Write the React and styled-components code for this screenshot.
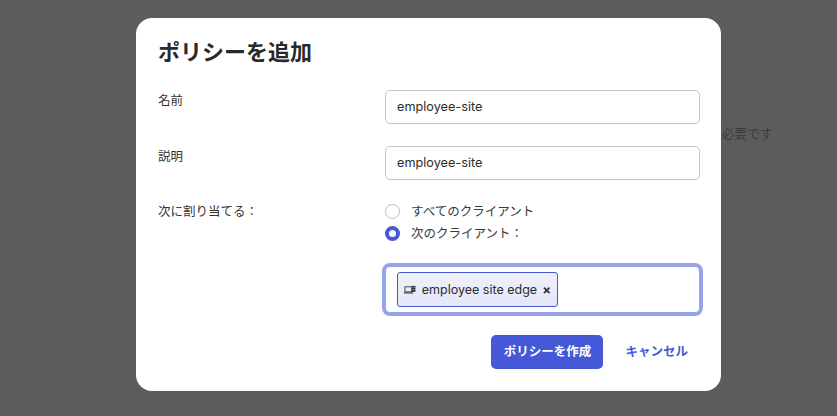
import React from "react";
import styled, { createGlobalStyle } from "styled-components";

const FONT = `Inter, "Noto Sans CJK JP", "Liberation Sans", sans-serif`;

const Global = createGlobalStyle`
  html, body { margin: 0; padding: 0; height: 100%; overflow: hidden; }
  body { font-family: ${FONT}; }
  #root { height: 100%; }
`;

const Page = styled.div`
  position: relative;
  width: 837px;
  height: 416px;
  background: #5c5c5c;
  overflow: hidden;
`;

const BackgroundNote = styled.div`
  display: flex;
  justify-content: flex-end;
  padding: 125px 64px 0 0;
  font-size: 12.9px;
  line-height: 17px;
  color: #3c3c3c;
`;

const Modal = styled.div`
  position: absolute;
  left: 136px;
  top: 18px;
  width: 585px;
  height: 373px;
  box-sizing: border-box;
  padding: 19px 21px 22px 22px;
  background: #fff;
  border-radius: 16px;
  display: flex;
  flex-direction: column;
`;

const Title = styled.h2`
  margin: 0 0 23px;
  font-size: 22px;
  line-height: 30px;
  font-weight: 700;
  color: #2a2a2a;
`;

const Row = styled.div`
  display: grid;
  grid-template-columns: 227px 315px;
  margin-bottom: ${(p) => p.$gap}px;
`;

const Label = styled.div`
  font-size: 12.5px;
  line-height: 18px;
  color: #333;
  padding-top: ${(p) => p.$top}px;
`;

const TextInput = styled.div`
  height: 34px;
  box-sizing: border-box;
  border: 1px solid #c4c4c4;
  border-radius: 5px;
  padding: 0 11px 1px;
  display: flex;
  align-items: center;
  font-size: 12.7px;
  color: #2c2c2c;
`;

const RadioGroup = styled.div`
  display: flex;
  flex-direction: column;
  gap: 4px;
`;

const RadioRow = styled.div`
  display: flex;
  align-items: center;
  gap: 11px;
  height: 18px;
  font-size: 12.5px;
  color: #3a3a3a;
`;

const RadioText = styled.span`
  margin-bottom: 2px;
`;

const RadioMark = styled.span`
  width: 15px;
  height: 15px;
  border-radius: 50%;
  box-sizing: border-box;
  background: #fff;
  border: ${(p) => (p.$checked ? "4.5px solid #4458d8" : "1px solid #bdbdbd")};
`;

const TagField = styled.div`
  grid-column: 2;
  height: 53px;
  width: 321px;
  margin-left: -3px;
  box-sizing: border-box;
  border: 4px solid #98a4ea;
  border-radius: 8px;
  padding: 0 11px;
  display: flex;
  align-items: center;
`;

const Tag = styled.div`
  height: 35px;
  width: 161px;
  box-sizing: border-box;
  border: 1px solid #4458d8;
  border-radius: 3px;
  background: linear-gradient(#f0f1fc, #e3e6f9);
  display: flex;
  align-items: center;
  gap: 5px;
  padding: 0 6px;
  font-size: 12.5px;
  color: #2c2c2c;
  white-space: nowrap;
`;

const TagLabel = styled.span`
  margin-left: 1px;
`;

const TagClose = styled.span`
  font-size: 13px;
  font-weight: 700;
  color: #333;
`;

const Actions = styled.div`
  display: flex;
  justify-content: flex-end;
  align-items: center;
  margin-top: auto;
`;

const PrimaryButton = styled.button`
  height: 34px;
  width: 112px;
  border: 0;
  padding: 0 0 3px;
  border-radius: 5px;
  background: #4458d8;
  color: #fff;
  font: 700 12.5px ${FONT};
`;

const LinkButton = styled.button`
  height: 34px;
  margin-left: 10px;
  border: 0;
  padding: 0 12px 3px;
  background: none;
  color: #4458d8;
  font: 700 12.5px ${FONT};
`;

const DeviceIcon = () => (
  <svg width="13" height="10" viewBox="0 0 13 10" aria-hidden="true">
    <rect x="1" y="1.5" width="7.5" height="5.5" fill="#eceef6" stroke="#3f3f3f" strokeWidth="1" />
    <rect x="8.5" y="0.5" width="4" height="6.5" fill="#2c2c2c" />
    <path d="M9 2.4h3M9 4.4h3" stroke="#bbb" strokeWidth="0.7" />
    <rect x="0" y="7.5" width="10" height="1.4" fill="#4a4a4a" />
  </svg>
);

export default function App() {
  return (
    <Page>
      <Global />
      <BackgroundNote>が必要です</BackgroundNote>
      <Modal>
        <Title>ポリシーを追加</Title>
        <Row $gap={22}>
          <Label $top={2}>名前</Label>
          <TextInput>employee-site</TextInput>
        </Row>
        <Row $gap={22}>
          <Label $top={2}>説明</Label>
          <TextInput>employee-site</TextInput>
        </Row>
        <Row $gap={21}>
          <Label $top={1}>次に割り当てる：</Label>
          <RadioGroup>
            <RadioRow><RadioMark /><RadioText>すべてのクライアント</RadioText></RadioRow>
            <RadioRow><RadioMark $checked /><RadioText>次のクライアント：</RadioText></RadioRow>
          </RadioGroup>
        </Row>
        <Row $gap={0}>
          <TagField>
            <Tag>
              <DeviceIcon />
              <TagLabel>employee site edge</TagLabel>
              <TagClose>×</TagClose>
            </Tag>
          </TagField>
        </Row>
        <Actions>
          <PrimaryButton>ポリシーを作成</PrimaryButton>
          <LinkButton>キャンセル</LinkButton>
        </Actions>
      </Modal>
    </Page>
  );
}
